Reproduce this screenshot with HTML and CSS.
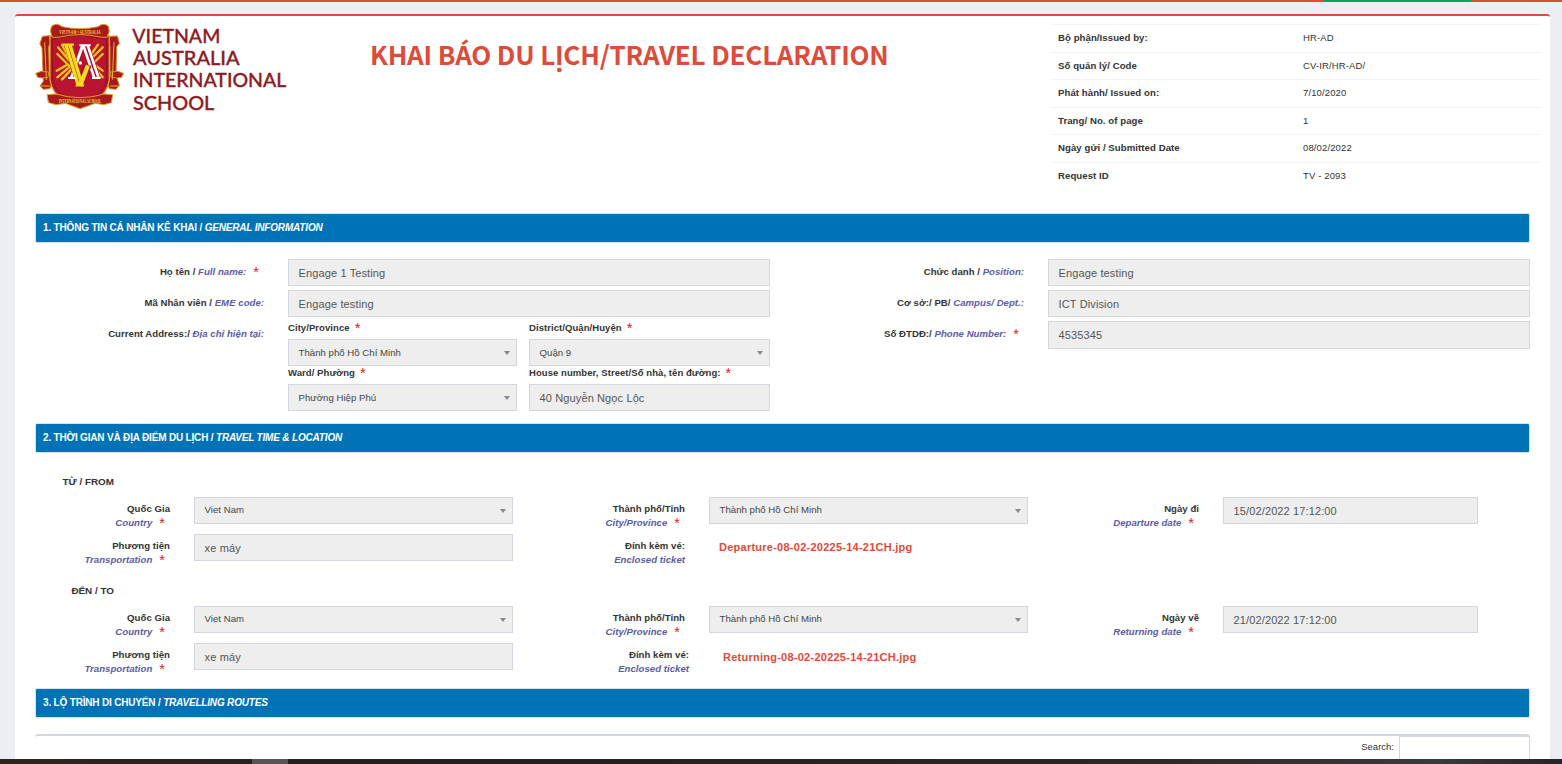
FILE: index.html
```html
<!DOCTYPE html>
<html lang="vi">
<head>
<meta charset="utf-8">
<title>Travel Declaration</title>
<link rel="stylesheet" href="styles.css">
</head>
<body>
<div class="progress"><span class="progress-part"></span></div>
<main class="card">
  <header class="head">
    <svg class="logo" width="256" height="96" viewBox="0 0 768 288">
      <g stroke-linejoin="round" stroke-linecap="round">
        <g fill="#a81a1c" stroke="#d08f20" stroke-width="3">
          <path d="M38 55 L58 53 L62 74 L56 86 L58 172 L68 190 L60 212 L40 214 L30 204 L40 190 L36 90 L30 78 Z"/>
          <path d="M240 55 L262 54 L268 76 L260 86 L258 172 L268 202 L258 214 L238 212 L232 192 L240 174 L240 86 L234 72 Z"/>
          <path d="M18 166 L34 160 L56 162 L54 178 L36 180 L24 178 Z"/>
          <path d="M280 166 L264 160 L242 162 L244 178 L262 180 L274 178 Z"/>
        </g>
        <path d="M60 54 Q150 32 238 54 L238 186 Q232 228 194 246 L150 272 L104 246 Q66 228 60 186 Z" fill="#b8122e" stroke="#dca322" stroke-width="4"/>
        <path d="M68 64 Q150 42 230 64 L230 184 Q224 222 188 238 L150 260 L110 238 Q74 222 68 184 Z" fill="#b9152f" stroke="#7c0d20" stroke-width="2"/>
        <g fill="#a81a1c" stroke="#dca322" stroke-width="3">
          <path d="M66 24 Q80 12 96 26 Q150 38 204 26 Q222 12 236 26 Q242 42 230 58 L216 58 Q150 42 84 58 L68 58 Q56 38 66 24 Z"/>
          <path d="M52 230 L78 228 Q150 250 222 228 L248 230 L244 254 L222 260 L196 256 L150 272 L106 256 L78 260 L56 254 Z"/>
        </g>
        <g fill="none" stroke="#f1c51c" stroke-width="7">
          <path d="M84 88 L116 126 M96 80 L128 140 M82 108 L118 144 M82 178 L124 142 M96 184 L128 150 M80 158 L112 140 M218 88 L186 120 M204 80 L180 114 M218 108 L188 138 M218 178 L190 146 M218 158 L190 138"/>
        </g>
        <g fill="none" stroke-linecap="butt">
          <path d="M158 82 L124 180" stroke="#a81229" stroke-width="15"/>
          <path d="M166 82 L200 180" stroke="#a81229" stroke-width="24"/>
          <path d="M158 82 L124 180" stroke="#fff" stroke-width="9"/>
          <path d="M160 82 L193 180 M173 82 L206 180" stroke="#fff" stroke-width="8"/>
          <path d="M114 80 L150 200 L174 140" stroke="#a81229" stroke-width="23"/>
          <path d="M108 80 L144 200 M120 80 L156 200" stroke="#f9dc1e" stroke-width="10"/>
          <path d="M150 204 L174 142" stroke="#f9dc1e" stroke-width="13"/>
          <path d="M98 80 L132 80 M137 202 L162 202" stroke="#f9dc1e" stroke-width="7"/>
          <path d="M148 82 L182 82 M114 180 L136 180 M186 180 L212 180" stroke="#fff" stroke-width="6"/>
        </g>
        <circle cx="151" cy="135" r="5" fill="#fff"/>
        <path d="M44 74 L49 184 M252 74 L247 184 M34 204 L58 204 M242 204 L264 204" fill="none" stroke="#e8b52c" stroke-width="3"/>
      </g>
      <g fill="#f2ca48" font-family="Liberation Serif, serif" font-weight="bold" font-size="16">
        <text x="88" y="47" textLength="124" lengthAdjust="spacingAndGlyphs">VIETNAM • AUSTRALIA</text>
        <text x="86" y="256" textLength="128" lengthAdjust="spacingAndGlyphs">INTERNATIONAL SCHOOL</text>
      </g>
      <g class="logo-words">
        <text x="307" y="74" textLength="264" lengthAdjust="spacingAndGlyphs">VIETNAM</text>
        <text x="309" y="141" textLength="320" lengthAdjust="spacingAndGlyphs">AUSTRALIA</text>
        <text x="309" y="208" textLength="460" lengthAdjust="spacingAndGlyphs">INTERNATIONAL</text>
        <text x="309" y="275" textLength="244" lengthAdjust="spacingAndGlyphs">SCHOOL</text>
      </g>
    </svg>
    <h1 class="title">KHAI BÁO DU LỊCH/TRAVEL DECLARATION</h1>
    <dl class="meta">
      <div><dt>Bộ phận/Issued by:</dt><dd>HR-AD</dd></div>
      <div><dt>Số quản lý/ Code</dt><dd>CV-IR/HR-AD/</dd></div>
      <div><dt>Phát hành/ Issued on:</dt><dd>7/10/2020</dd></div>
      <div><dt>Trang/ No. of page</dt><dd>1</dd></div>
      <div><dt>Ngày gửi / Submitted Date</dt><dd>08/02/2022</dd></div>
      <div><dt>Request ID</dt><dd>TV - 2093</dd></div>
    </dl>
  </header>

  <h2 class="bar">1. THÔNG TIN CÁ NHÂN KÊ KHAI / <i>GENERAL INFORMATION</i></h2>
  <section class="general">
    <div class="rows">
      <div class="row"><label>Họ tên / <i>Full name:</i><b class="req pad">*</b></label><div class="input">Engage 1 Testing</div></div>
      <div class="row"><label>Mã Nhân viên / <i>EME code:</i></label><div class="input">Engage testing</div></div>
      <div class="row"><label>Current Address:/ <i>Địa chỉ hiện tại:</i></label>
        <div class="address">
          <div class="caption">City/Province<b class="req">*</b></div>
          <div class="caption">District/Quận/Huyện<b class="req">*</b></div>
          <div class="select">Thành phố Hồ Chí Minh</div>
          <div class="select">Quận 9</div>
          <div class="caption">Ward/ Phường<b class="req">*</b></div>
          <div class="caption">House number, Street/Số nhà, tên đường:<b class="req">*</b></div>
          <div class="select">Phường Hiệp Phú</div>
          <div class="input">40 Nguyễn Ngọc Lộc</div>
        </div>
      </div>
    </div>
    <div class="rows">
      <div class="row"><label>Chức danh / <i>Position:</i></label><div class="input">Engage testing</div></div>
      <div class="row"><label>Cơ sở:/ PB/ <i>Campus/ Dept.:</i></label><div class="input">ICT Division</div></div>
      <div class="row"><label>Số ĐTDĐ:/ <i>Phone Number:</i><b class="req pad">*</b></label><div class="input tall">4535345</div></div>
    </div>
  </section>

  <h2 class="bar">2. THỜI GIAN VÀ ĐỊA ĐIỂM DU LỊCH / <i>TRAVEL TIME &amp; LOCATION</i></h2>
  <section class="travel">
    <h3 class="leg-name">TỪ / FROM</h3>
    <div class="leg">
      <label>Quốc Gia<br><i>Country</i><b class="req pad">*</b></label><div class="select">Viet Nam</div>
      <label>Thành phố/Tỉnh<br><i>City/Province</i><b class="req pad">*</b></label><div class="select">Thành phố Hồ Chí Minh</div>
      <label>Ngày đi<br><i>Departure date</i><b class="req pad">*</b></label><div class="input">15/02/2022 17:12:00</div>
      <label>Phương tiện<br><i>Transportation</i><b class="req pad">*</b></label><div class="input">xe máy</div>
      <label>Đính kèm vé:<br><i>Enclosed ticket</i></label><a class="ticket">Departure-08-02-20225-14-21CH.jpg</a>
    </div>
    <h3 class="leg-name">ĐẾN / TO</h3>
    <div class="leg">
      <label>Quốc Gia<br><i>Country</i><b class="req pad">*</b></label><div class="select">Viet Nam</div>
      <label>Thành phố/Tỉnh<br><i>City/Province</i><b class="req pad">*</b></label><div class="select">Thành phố Hồ Chí Minh</div>
      <label>Ngày về<br><i>Returning date</i><b class="req pad">*</b></label><div class="input">21/02/2022 17:12:00</div>
      <label>Phương tiện<br><i>Transportation</i><b class="req pad">*</b></label><div class="input">xe máy</div>
      <label class="shift">Đính kèm vé:<br><i>Enclosed ticket</i></label><a class="ticket shift-link">Returning-08-02-20225-14-21CH.jpg</a>
    </div>
  </section>

  <h2 class="bar">3. LỘ TRÌNH DI CHUYỂN / <i>TRAVELLING ROUTES</i></h2>
  <section class="routes"><span>Search:</span><div class="search"></div></section>
</main>
<footer class="edge"><span></span></footer>
</body>
</html>
```

FILE: styles.css
```css
* { box-sizing: border-box; }
body {
  margin: 0; height: 764px; overflow: hidden; background: #ebeef3; color: #333;
  display: flex; flex-direction: column;
  font: 9.5px/14px "Liberation Sans", Arial, sans-serif;
}
.progress { height: 2px; flex: none; background: #dd4b39; display: flex; padding-left: 1324px; }
.progress-part { width: 147px; background: #00a65a; }
.card {
  margin: 12px 12px 0 15px; flex: 1; min-height: 0; overflow: hidden; background: #fff;
  border-top: 2px solid #dd4b39; border-radius: 3px 3px 0 0; padding: 0 20px;
}
.head { height: 197px; display: flex; align-items: flex-start; }
.logo { margin: 2px 0 0 -5px; flex: none; overflow: visible; }
.logo-words text { font: 500 57px Lato, sans-serif; fill: #8e1b22; stroke: #8e1b22; stroke-width: 1; }
.title {
  margin: 19px 0 0 84px; width: 680px; flex: none; white-space: nowrap;
  font: 700 26px/38px "Noto Sans CJK SC", "Noto Sans", sans-serif; letter-spacing: -.2px; color: #dd4b39;
}
.meta { margin: 8px -12px 0 1px; width: 490px; flex: none; }
.meta div { height: 27.5px; display: flex; border-top: 1px solid #f4f4f4; padding: 6px 7px 0; }
.meta dt { width: 245px; font-weight: bold; font-size: 9.6px; letter-spacing: .07px; }
.meta dd { margin: 0; letter-spacing: .13px; }
.bar {
  margin: 0; height: 30px; padding: 0 7px; border: 1px solid #d5e4ee; border-radius: 2px;
  background: #0073b7; color: #fff; font-size: 10px; line-height: 27px; letter-spacing: -.18px;
}
.general { height: 180px; padding-top: 16px; display: flex; justify-content: space-between; }
.rows { width: 735px; display: flex; flex-direction: column; gap: 4px; }
.row { height: 27px; display: flex; justify-content: flex-end; gap: 24px; }
label { text-align: right; font-weight: bold; font-size: 9.6px; letter-spacing: .03px; white-space: nowrap; }
.row > label { padding-top: 6px; }
label i { color: #5c5ca6; }
.row > .input, .address { width: 482px; flex: none; }
.input, .select {
  height: 27px; border: 1px solid #d2d6de; background: #eee; color: #555;
  padding: 0 9.6px; font-size: 11px; line-height: 27px; letter-spacing: .12px; white-space: nowrap;
}
.input.tall { height: 28px; }
.select {
  font-size: 9.6px; line-height: 25px; color: #444; letter-spacing: .02px;
  display: flex; align-items: center; justify-content: space-between; padding-right: 6px;
}
.select::after { content: ""; border: 3px solid transparent; border-top: 4px solid #888; border-bottom: 0; margin-top: 1px; }
.leg .select { line-height: 23px; align-items: flex-start; }
.leg .select::after { margin-top: 11px; }
.address { display: grid; grid-template-columns: 229px 241px; column-gap: 12px; grid-template-rows: 18px 27px 18px 27px; height: 90px; }
.caption { font-weight: bold; white-space: nowrap; letter-spacing: .07px; }
.req { font-weight: normal; font-size: 14.5px; line-height: 0; color: #e02020; margin-left: 5px; position: relative; top: 2px; }
.req.pad { margin: 0 5px 0 7px; }
.travel { height: 235px; padding-top: 22px; }
.leg-name { margin: 0 0 8px; width: 79px; text-align: right; font-size: 9.9px; line-height: 14px; white-space: nowrap; }
.leg {
  height: 64px; margin-bottom: 23px; display: grid;
  grid-template-columns: 135px 319px 148px 319px 147px 255px; column-gap: 24px;
  grid-template-rows: 27px 27px; row-gap: 10px;
}
.leg label { padding-top: 5px; }
.ticket { color: #dd4b39; font-weight: bold; font-size: 11px; line-height: 27px; letter-spacing: .25px; padding-left: 10px; }
.shift { margin-right: -4px; }
.shift-link { padding-left: 14px; line-height: 29px; }
.routes {
  margin-top: 16px; height: 60px; border-top: 2px solid #d2d6de; border-radius: 3px;
  display: flex; justify-content: flex-end; gap: 5px; line-height: 21px;
}
.search { width: 131px; border: 1px solid #d2d6de; }
.edge { height: 5px; flex: none; background: linear-gradient(90deg, #2d2520, #202121 30%, #2b2724 70%, #363b3c 92%, #242526); padding-left: 252px; display: flex; }
.edge span { width: 36px; background: #555; }
```
